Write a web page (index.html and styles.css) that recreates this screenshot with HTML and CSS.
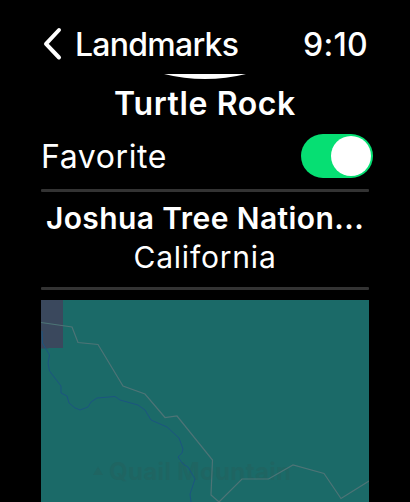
FILE: index.html
```
<!DOCTYPE html>
<html lang="en">
<head>
<meta charset="utf-8">
<title>Landmarks</title>
<link rel="stylesheet" href="styles.css">
</head>
<body>
<main class="watch">
  <header class="status">
    <svg class="chevron" viewBox="0 0 20 34"><path d="M17 3 L4 16.8 L17 30.5"/></svg>
    <span class="back">Landmarks</span>
    <time class="time">9:10</time>
  </header>
  <svg class="photo-edge" viewBox="0 0 82 5"><path d="M0 0H82Q62 5 41 5T0 0Z"/></svg>
  <h1 class="title"><span>Turtle Rock</span></h1>
  <div class="favorite">
    <span class="favorite-label">Favorite</span>
    <span class="toggle"><span class="knob"></span></span>
  </div>
  <hr class="divider">
  <div class="park"><span>Joshua Tree Nation...</span></div>
  <div class="state"><span>California</span></div>
  <hr class="divider">
  <svg class="map" viewBox="41 300 328 202">
    <rect class="land" x="41" y="300" width="328" height="202"/>
    <path class="zone" d="M41 300H63V348H49L48 348.5H41Z"/>
    <path class="peak" d="M93 475L98 466.500L103 475Z"/>
    <text class="map-label" x="109" y="480" textLength="182">Quail Mountain</text>
    <path class="river" d="M42 331L42.500 343L49.500 355L48 363L49.500 371L61 386L61 393L67 396L69 403Q75 409 80 410L88 407L91 402L97 398L115 396.500L120 400L138 405L145 410L151 420L167 427L179 438L183 449L182 453L178 457L183 464L188 467L195 479L190 494L191 502"/>
    <path class="boundary" d="M41 322.500L72 327L78 342.500L98 344.500L123 386L145 394L165 417.500L177 416L212.500 460L211 495L219 502L242 479L268.500 479L293 465L324 473.500L341 498.500L369 481"/>
  </svg>
</main>
</body>
</html>
```
FILE: styles.css
```
* { box-sizing: border-box; }
body {
  margin: 0;
  background: #000;
  color: #fff;
  font-family: Inter, "Liberation Sans", sans-serif;
}
.watch {
  width: 410px;
  height: 502px;
  padding: 24px 41px 0;
  overflow: hidden;
  display: flex;
  flex-direction: column;
}
.status {
  display: flex;
  align-items: center;
  height: 40px;
  flex: none;
  font-size: 32px;
  font-weight: 500;
  line-height: 40px;
}
.chevron { width: 20px; height: 34px; margin: 0 13px 0 1px; }
.chevron path {
  fill: none;
  stroke: #fff;
  stroke-width: 4;
  stroke-linecap: round;
  stroke-linejoin: round;
}
.back, .time { padding-top: 2px; }
.back { letter-spacing: -0.75px; }
.time { margin-left: auto; margin-right: 1px; letter-spacing: 0.3px; }
.photo-edge {
  width: 82px;
  height: 5px;
  flex: none;
  margin: 10px 0 0 123px;
  fill: #fff;
}
.title {
  margin: 5px 0 0;
  flex: none;
  height: 40px;
  line-height: 40px;
  font-size: 32px;
  font-weight: 600;
  letter-spacing: 0.6px;
  text-align: center;
  white-space: nowrap;
}
.favorite {
  display: flex;
  justify-content: space-between;
  align-items: center;
  height: 44px;
  flex: none;
  margin: 10px -4px 11px 0;
}
.favorite-label { font-size: 32px; letter-spacing: 0.6px; }
.toggle {
  width: 72px;
  height: 44px;
  padding: 2px;
  border-radius: 22px;
  background: #06df73;
  display: flex;
  justify-content: flex-end;
}
.knob { width: 40px; height: 40px; border-radius: 50%; background: #fff; }
.divider {
  width: 328px;
  height: 3px;
  flex: none;
  margin: 0;
  border: 0;
  border-radius: 1px;
  background: #333;
}
.park {
  height: 38px;
  flex: none;
  margin-top: 7px;
  line-height: 38px;
  font-size: 30px;
  font-weight: 600;
  letter-spacing: 0.4px;
  text-align: center;
  white-space: nowrap;
}
.state {
  height: 38px;
  flex: none;
  margin-bottom: 12px;
  line-height: 40px;
  font-size: 30px;
  text-align: center;
  letter-spacing: 0.8px;
}
.map { display: block; width: 328px; height: 202px; flex: none; margin-top: 10px; }
.land { fill: #1b6a68; }
.zone { fill: #3a485d; }
.peak, .map-label { fill: #1f6562; }
.map-label { font-size: 24px; font-weight: 700; }
.river { fill: none; stroke: #1b5580; stroke-width: 1; }
.boundary { fill: none; stroke: #4d7476; stroke-width: 1.2; }
```
